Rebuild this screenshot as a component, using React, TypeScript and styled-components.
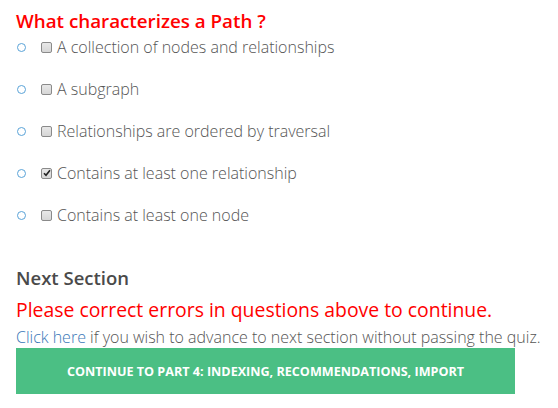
import React from "react";
import styled, { createGlobalStyle } from "styled-components";

const Global = createGlobalStyle`
  html, body { margin: 0; padding: 0; background: #fff; }
  body { font-family: "Open Sans", "Liberation Sans", sans-serif; }
`;

const Page = styled.div`
  padding: 8px 16px 0 16px;
  width: 526px;
`;

const Title = styled.h2`
  margin: 0;
  font-size: 18.8px;
  font-weight: 600;
  color: #ff0000;
  line-height: 26px;
`;

const Options = styled.div`
  display: flex;
  flex-direction: column;
  gap: 18px;
  margin-top: 1px;
`;

const Row = styled.label`
  display: flex;
  align-items: center;
  height: 24px;
  font-size: 16px;
  font-weight: 300;
  color: #555;
`;

const Radio = styled.span`
  width: 7px;
  height: 7px;
  border: 1px solid #5aa3d8;
  border-radius: 50%;
  margin-left: 1px;
  margin-right: 15px;
  flex: none;
`;

const Box = styled.span<{ $checked?: boolean }>`
  width: 9px;
  height: 9px;
  border: 1px solid #8a8a8a;
  border-radius: 2px;
  background: linear-gradient(#e8e8e8, #d6d6d6);
  margin-right: 5px;
  flex: none;
  display: flex;
  align-items: center;
  justify-content: center;
`;

const Next = styled.h3`
  margin: 38px 0 0 0;
  font-size: 18.5px;
  font-weight: 600;
  color: #4a4a4a;
  line-height: 26px;
`;

const Error = styled.div`
  margin-top: 6px;
  font-size: 19.4px;
  font-weight: 400;
  color: #ff0000;
  line-height: 26px;
`;

const Info = styled.div`
  margin-top: 3px;
  font-size: 16px;
  font-weight: 300;
  color: #555;
  line-height: 22px;
  white-space: nowrap;
`;

const Link = styled.a`
  color: #3a78b8;
  text-decoration: none;
`;

const Button = styled.button`
  display: flex;
  align-items: center;
  justify-content: center;
  width: 499px;
  height: 46px;
  margin-top: 0;
  border: none;
  background: #4bbf84;
  color: #fff;
  font-family: "Open Sans", "Liberation Sans", sans-serif;
  font-size: 12.6px;
  font-weight: 700;
  text-transform: uppercase;
  padding: 0;
`;

const options = [
  { text: "A collection of nodes and relationships", checked: false },
  { text: "A subgraph", checked: false },
  { text: "Relationships are ordered by traversal", checked: false },
  { text: "Contains at least one relationship", checked: true },
  { text: "Contains at least one node", checked: false },
];

export default function App() {
  return (
    <Page>
      <Global />
      <Title>What characterizes a Path ?</Title>
      <Options>
        {options.map((o) => (
          <Row key={o.text}>
            <Radio />
            <Box $checked={o.checked}>
              {o.checked && (
                <svg width="8" height="8" viewBox="0 0 8 8">
                  <path d="M1 4.2 L3 6.3 L7 1.2" stroke="#222" strokeWidth="1.6" fill="none" />
                </svg>
              )}
            </Box>
            {o.text}
          </Row>
        ))}
      </Options>
      <Next>Next Section</Next>
      <Error>Please correct errors in questions above to continue.</Error>
      <Info>
        <Link href="#">Click here</Link> if you wish to advance to next section without passing the quiz.
      </Info>
      <Button>Continue to Part 4: Indexing, Recommendations, Import</Button>
    </Page>
  );
}
